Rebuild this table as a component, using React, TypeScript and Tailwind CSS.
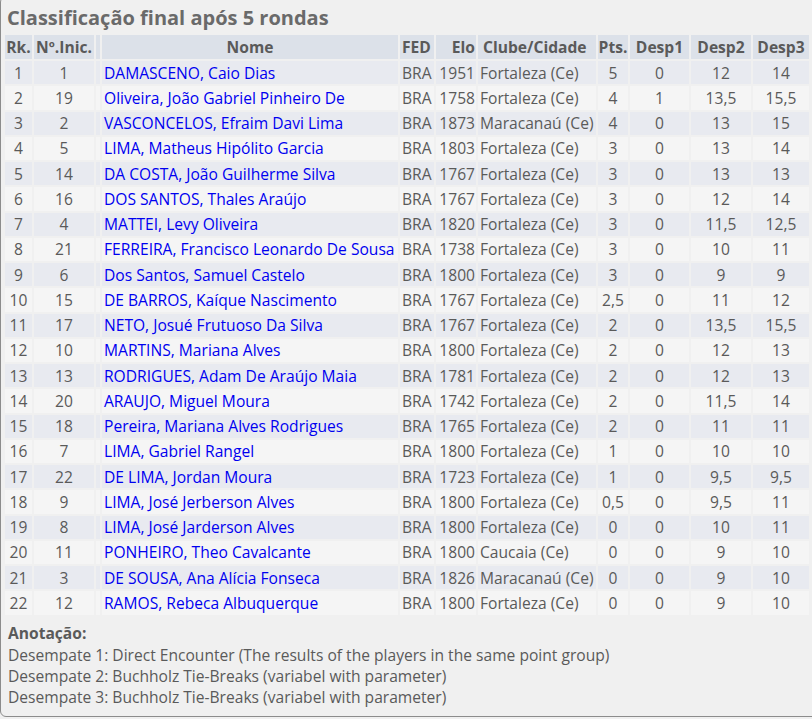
import React from 'react';

type Row = [number, number, string, string, number, string, string, string, string, string];

const rows: Row[] = [
  [1, 1, 'DAMASCENO, Caio Dias', 'BRA', 1951, 'Fortaleza (Ce)', '5', '0', '12', '14'],
  [2, 19, 'Oliveira, João Gabriel Pinheiro De', 'BRA', 1758, 'Fortaleza (Ce)', '4', '1', '13,5', '15,5'],
  [3, 2, 'VASCONCELOS, Efraim Davi Lima', 'BRA', 1873, 'Maracanaú (Ce)', '4', '0', '13', '15'],
  [4, 5, 'LIMA, Matheus Hipólito Garcia', 'BRA', 1803, 'Fortaleza (Ce)', '3', '0', '13', '14'],
  [5, 14, 'DA COSTA, João Guilherme Silva', 'BRA', 1767, 'Fortaleza (Ce)', '3', '0', '13', '13'],
  [6, 16, 'DOS SANTOS, Thales Araújo', 'BRA', 1767, 'Fortaleza (Ce)', '3', '0', '12', '14'],
  [7, 4, 'MATTEI, Levy Oliveira', 'BRA', 1820, 'Fortaleza (Ce)', '3', '0', '11,5', '12,5'],
  [8, 21, 'FERREIRA, Francisco Leonardo De Sousa', 'BRA', 1738, 'Fortaleza (Ce)', '3', '0', '10', '11'],
  [9, 6, 'Dos Santos, Samuel Castelo', 'BRA', 1800, 'Fortaleza (Ce)', '3', '0', '9', '9'],
  [10, 15, 'DE BARROS, Kaíque Nascimento', 'BRA', 1767, 'Fortaleza (Ce)', '2,5', '0', '11', '12'],
  [11, 17, 'NETO, Josué Frutuoso Da Silva', 'BRA', 1767, 'Fortaleza (Ce)', '2', '0', '13,5', '15,5'],
  [12, 10, 'MARTINS, Mariana Alves', 'BRA', 1800, 'Fortaleza (Ce)', '2', '0', '12', '13'],
  [13, 13, 'RODRIGUES, Adam De Araújo Maia', 'BRA', 1781, 'Fortaleza (Ce)', '2', '0', '12', '13'],
  [14, 20, 'ARAUJO, Miguel Moura', 'BRA', 1742, 'Fortaleza (Ce)', '2', '0', '11,5', '14'],
  [15, 18, 'Pereira, Mariana Alves Rodrigues', 'BRA', 1765, 'Fortaleza (Ce)', '2', '0', '11', '11'],
  [16, 7, 'LIMA, Gabriel Rangel', 'BRA', 1800, 'Fortaleza (Ce)', '1', '0', '10', '10'],
  [17, 22, 'DE LIMA, Jordan Moura', 'BRA', 1723, 'Fortaleza (Ce)', '1', '0', '9,5', '9,5'],
  [18, 9, 'LIMA, José Jerberson Alves', 'BRA', 1800, 'Fortaleza (Ce)', '0,5', '0', '9,5', '11'],
  [19, 8, 'LIMA, José Jarderson Alves', 'BRA', 1800, 'Fortaleza (Ce)', '0', '0', '10', '11'],
  [20, 11, 'PONHEIRO, Theo Cavalcante', 'BRA', 1800, 'Caucaia (Ce)', '0', '0', '9', '10'],
  [21, 3, 'DE SOUSA, Ana Alícia Fonseca', 'BRA', 1826, 'Maracanaú (Ce)', '0', '0', '9', '10'],
  [22, 12, 'RAMOS, Rebeca Albuquerque', 'BRA', 1800, 'Fortaleza (Ce)', '0', '0', '9', '10'],
];

const notes = [
  'Desempate 1: Direct Encounter (The results of the players in the same point group)',
  'Desempate 2: Buchholz Tie-Breaks (variabel with parameter)',
  'Desempate 3: Buchholz Tie-Breaks (variabel with parameter)',
];

export default function App() {
  return (
    <div className="w-[812px] h-[719px] overflow-hidden bg-[#f0f0f0] font-['Open_Sans',sans-serif] text-[#5a5a5a]">
      <div className="w-[840px] h-[721px] -mt-[4px] border border-[#8c8c8c] rounded-[6px]">
        <h1 className="pl-[6px] pt-[7px] text-[20px] leading-[28px] font-bold text-[#6a6a6a]">
          Classificação final após 5 rondas
        </h1>
        <table className="table-fixed border-separate border-spacing-[2px] ml-[2px] mt-[1px] w-[808px] text-[15.6px] leading-[20px]">
          <colgroup>
            <col className="w-[27px]" />
            <col className="w-[60px]" />
            <col className="w-[4px]" />
            <col className="w-[296px]" />
            <col className="w-[34px]" />
            <col className="w-[40px]" />
            <col className="w-[118px]" />
            <col className="w-[30px]" />
            <col className="w-[59px]" />
            <col className="w-[60px]" />
            <col className="w-[56px]" />
          </colgroup>
          <thead>
            <tr className="bg-[#dce1e9] h-[24px] font-bold text-[#5a5a5a]">
              <th className="p-0 text-center whitespace-nowrap">Rk.</th>
              <th className="p-0 text-center whitespace-nowrap">Nº.Inic.</th>
              <th className="p-0"></th>
              <th className="p-0 text-center">Nome</th>
              <th className="p-0 pl-[2px] text-left">FED</th>
              <th className="p-0 pr-[1px] text-right">Elo</th>
              <th className="p-0 pl-[5px] text-left whitespace-nowrap">Clube/Cidade</th>
              <th className="p-0 text-center">Pts.</th>
              <th className="p-0 text-center">Desp1</th>
              <th className="p-0 text-center">Desp2</th>
              <th className="p-0 text-center">Desp3</th>
            </tr>
          </thead>
          <tbody>
            {rows.map((r, i) => (
              <tr key={r[0]} className={`h-[23.25px] ${i % 2 === 0 ? 'bg-[#e8eaf0]' : 'bg-[#f5f5f5]'}`}>
                <td className="p-0 text-center">{r[0]}</td>
                <td className="p-0 text-center">{r[1]}</td>
                <td className="p-0"></td>
                <td className="p-0 pl-[2px] text-[#0000f0] whitespace-nowrap">{r[2]}</td>
                <td className="p-0 pl-[2px]">{r[3]}</td>
                <td className="p-0 pr-[1px] text-right">{r[4]}</td>
                <td className="p-0 pl-[2px] whitespace-nowrap">{r[5]}</td>
                <td className="p-0 text-center">{r[6]}</td>
                <td className="p-0 text-center">{r[7]}</td>
                <td className="p-0 text-center">{r[8]}</td>
                <td className="p-0 text-center">{r[9]}</td>
              </tr>
            ))}
          </tbody>
        </table>
        <div className="pl-[7px] pt-[5px] text-[15.6px] leading-[21px]">
          <div className="font-bold leading-[23px] text-[#5a5a5a]">Anotação:</div>
          {notes.map((n) => (
            <div key={n}>{n}</div>
          ))}
        </div>
      </div>
    </div>
  );
}
